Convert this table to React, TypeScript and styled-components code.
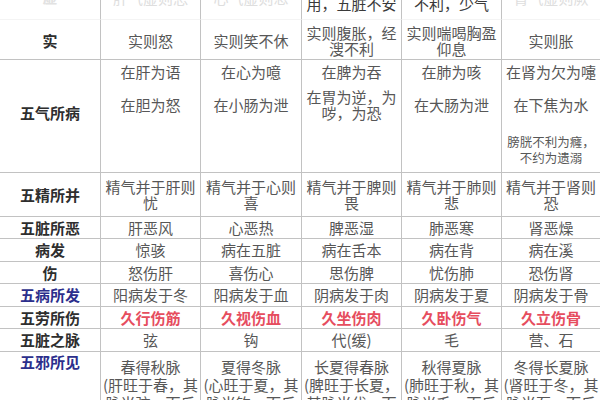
import React from "react";
import styled, { createGlobalStyle, css } from "styled-components";

const GlobalStyle = createGlobalStyle`
  html, body {
    margin: 0;
    padding: 0;
    background: #ffffff;
  }
  body {
    font-family: "Noto Sans CJK SC", "Noto Sans", sans-serif;
    overflow: hidden;
  }
`;

const Page = styled.div`
  width: 600px;
  height: 400px;
  overflow: hidden;
  background: #ffffff;
`;

const Table = styled.div`
  display: grid;
  margin-top: -30px;
  grid-template-columns: 101px 100px 101px 100px 100px 99px;
  grid-template-rows: 50px 40px 113px 44px 22px 23px 22px 23px 22px 23px 119px;
`;

type Align = "center" | "top" | "bottom";

const Cell = styled.div<{ $align?: Align; $pt?: number; $pb?: number; $faintLine?: boolean }>`
  box-sizing: border-box;
  border-right: 1px solid #c2c2c2;
  border-bottom: 1px solid ${(p) => (p.$faintLine ? "#f4f4f4" : "#c2c2c2")};
  display: flex;
  flex-direction: column;
  align-items: center;
  justify-content: ${(p) =>
    p.$align === "top" ? "flex-start" : p.$align === "bottom" ? "flex-end" : "center"};
  padding: ${(p) => p.$pt ?? 0}px 1px ${(p) => p.$pb ?? 0}px;
  text-align: center;
  font-size: 15px;
  line-height: 16px;
  color: #575757;
  overflow: hidden;
`;

type Tone = "dark" | "blue" | "faint";

const Label = styled(Cell)<{ $tone?: Tone }>`
  font-weight: 700;
  color: ${(p) => (p.$tone === "blue" ? "#2c2f8c" : p.$tone === "faint" ? "#e2e2e2" : "#2e2e2e")};
`;

type LineTone = "normal" | "red" | "faint" | "dark";

const Line = styled.div<{ $mt?: number; $small?: boolean; $tone?: LineTone; $nowrap?: boolean; $lh?: number }>`
  margin-top: ${(p) => p.$mt ?? 0}px;
  width: 100%;
  ${(p) =>
    p.$small &&
    css`
      font-size: 12.5px;
      line-height: 16px;
    `}
  ${(p) =>
    p.$lh &&
    css`
      line-height: ${p.$lh}px;
    `}
  ${(p) => p.$nowrap && css`white-space: nowrap;`}
  color: ${(p) =>
    p.$tone === "red"
      ? "#e64d5e"
      : p.$tone === "faint"
      ? "#dedede"
      : p.$tone === "dark"
      ? "#3a3a3a"
      : "inherit"};
  font-weight: ${(p) => (p.$tone === "red" ? 700 : 400)};
`;

const simpleRows: { label: string; tone?: Tone; cells: string[]; red?: boolean }[] = [
  { label: "五脏所恶", cells: ["肝恶风", "心恶热", "脾恶湿", "肺恶寒", "肾恶燥"] },
  { label: "病发", cells: ["惊骇", "病在五脏", "病在舌本", "病在背", "病在溪"] },
  { label: "伤", cells: ["怒伤肝", "喜伤心", "思伤脾", "忧伤肺", "恐伤肾"] },
  { label: "五病所发", tone: "blue", cells: ["阳病发于冬", "阳病发于血", "阴病发于肉", "阴病发于夏", "阴病发于骨"] },
  { label: "五劳所伤", cells: ["久行伤筋", "久视伤血", "久坐伤肉", "久卧伤气", "久立伤骨"], red: true },
  { label: "五脏之脉", cells: ["弦", "钩", "代(缓)", "毛", "营、石"] },
];

const evilRow: [string, string][] = [
  ["春得秋脉", "(肝旺于春，其脉当弦，而反得秋之毛脉)"],
  ["夏得冬脉", "(心旺于夏，其脉当钩，而反得冬之石脉)"],
  ["长夏得春脉", "(脾旺于长夏，其脉当代，而反得春之弦脉)"],
  ["秋得夏脉", "(肺旺于秋，其脉当毛，而反得夏之钩脉)"],
  ["冬得长夏脉", "(肾旺于冬，其脉当石，而反得长夏之代脉)"],
];

export default function App() {
  return (
    <Page>
      <GlobalStyle />
      <Table>
        {/* 虚 row (cut off at the top) */}
        <Label $tone="faint" $faintLine $align="bottom" $pb={14}>虚</Label>
        <Cell $faintLine $align="bottom" $pb={13}>
          <Line $tone="faint">肝气虚则恐</Line>
        </Cell>
        <Cell $faintLine $align="bottom" $pb={13}>
          <Line $tone="faint">心气虚则悲</Line>
        </Cell>
        <Cell $faintLine $align="bottom" $pb={7}>
          <Line $nowrap $tone="dark">脾气虚则四肢不</Line>
          <Line $nowrap $tone="dark">用，五脏不安</Line>
        </Cell>
        <Cell $faintLine $align="bottom" $pb={7}>
          <Line $nowrap $tone="dark">肺气虚则鼻塞</Line>
          <Line $nowrap $tone="dark">不利，少气</Line>
        </Cell>
        <Cell $faintLine $align="bottom" $pb={13}>
          <Line $tone="faint">肾气虚则厥</Line>
        </Cell>

        {/* 实 row */}
        <Label $pt={2}>实</Label>
        <Cell $pt={2}>实则怒</Cell>
        <Cell $pt={2}>实则笑不休</Cell>
        <Cell $pt={2}>实则腹胀，经溲不利</Cell>
        <Cell $pt={2}>实则喘喝胸盈仰息</Cell>
        <Cell $pt={2}>实则胀</Cell>

        {/* 五气所病 */}
        <Label $pb={6}>五气所病</Label>
        <Cell $align="top" $pt={4}>
          <Line>在肝为语</Line>
          <Line $mt={17}>在胆为怒</Line>
        </Cell>
        <Cell $align="top" $pt={4}>
          <Line>在心为噫</Line>
          <Line $mt={17}>在小肠为泄</Line>
        </Cell>
        <Cell $align="top" $pt={4}>
          <Line>在脾为吞</Line>
          <Line $mt={9}>在胃为逆，为哕，为恐</Line>
        </Cell>
        <Cell $align="top" $pt={4}>
          <Line>在肺为咳</Line>
          <Line $mt={17}>在大肠为泄</Line>
        </Cell>
        <Cell $align="top" $pt={4}>
          <Line>在肾为欠为嚏</Line>
          <Line $mt={17}>在下焦为水</Line>
          <Line $mt={21} $small>膀胱不利为癃，不约为遗溺</Line>
        </Cell>

        {/* 五精所并 */}
        <Label>五精所并</Label>
        <Cell>精气并于肝则忧</Cell>
        <Cell>精气并于心则喜</Cell>
        <Cell>精气并于脾则畏</Cell>
        <Cell>精气并于肺则悲</Cell>
        <Cell>精气并于肾则恐</Cell>

        {simpleRows.map((row) => (
          <React.Fragment key={row.label}>
            <Label $tone={row.tone}>{row.label}</Label>
            {row.cells.map((c) => (
              <Cell key={c}>
                <Line $tone={row.red ? "red" : "normal"}>{c}</Line>
              </Cell>
            ))}
          </React.Fragment>
        ))}

        {/* 五邪所见 */}
        <Label $tone="blue" $align="top" $pt={2} $lh={18}>五邪所见</Label>
        {evilRow.map(([a, b]) => (
          <Cell key={a} $align="top" $pt={6}>
            <Line $lh={18}>{a}</Line>
            <Line $lh={18}>{b}</Line>
          </Cell>
        ))}
      </Table>
    </Page>
  );
}
